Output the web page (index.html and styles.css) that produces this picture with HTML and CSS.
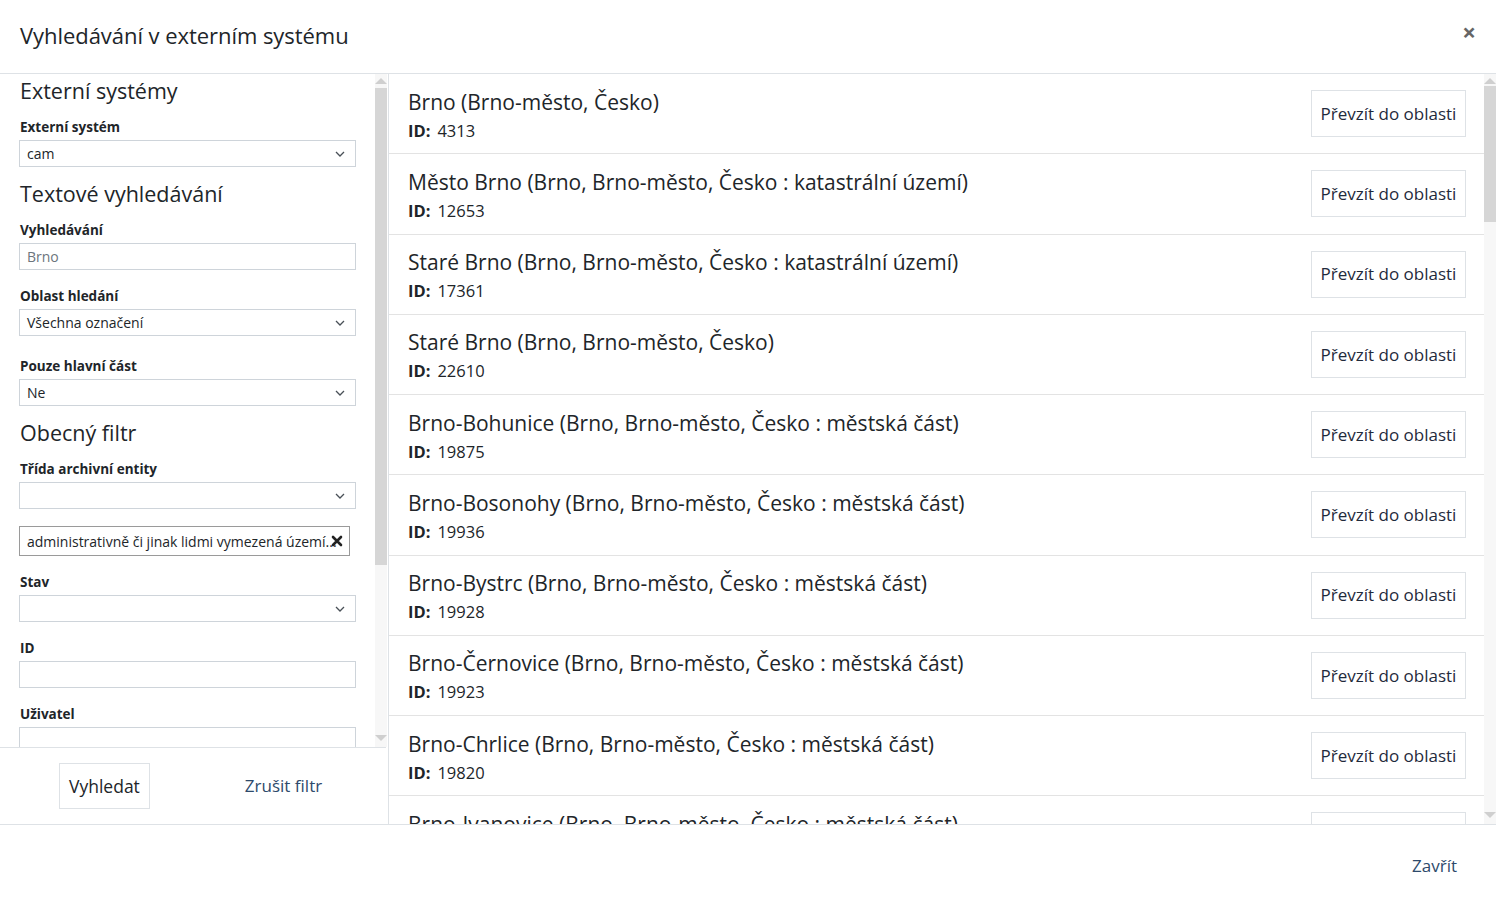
FILE: index.html
```html
<!DOCTYPE html>
<html lang="cs">
<head>
<meta charset="utf-8">
<title>Vyhledávání v externím systému</title>
<link rel="stylesheet" href="styles.css">
</head>
<body>
<div class="modal">
  <header class="modal-header">
    <h1 class="modal-title">Vyhledávání v externím systému</h1>
    <button class="close" type="button" aria-label="Zavřít">×</button>
  </header>
  <div class="modal-body">
    <aside class="filter">
      <div class="filter-scroll">
        <div class="filter-content">
          <h2 class="section-title first">Externí systémy</h2>
          <div class="field">
            <label class="field-label">Externí systém</label>
            <div class="select"><span>cam</span><svg class="chev" width="10" height="6" viewBox="0 0 10 6"><path d="M1 1l4 4 4-4" fill="none" stroke="#495057" stroke-width="1.3"/></svg></div>
          </div>
          <h2 class="section-title">Textové vyhledávání</h2>
          <div class="field">
            <label class="field-label">Vyhledávání</label>
            <div class="input muted">Brno</div>
          </div>
          <div class="field field-wide">
            <label class="field-label">Oblast hledání</label>
            <div class="select"><span>Všechna označení</span><svg class="chev" width="10" height="6" viewBox="0 0 10 6"><path d="M1 1l4 4 4-4" fill="none" stroke="#495057" stroke-width="1.3"/></svg></div>
          </div>
          <div class="field">
            <label class="field-label">Pouze hlavní část</label>
            <div class="select"><span>Ne</span><svg class="chev" width="10" height="6" viewBox="0 0 10 6"><path d="M1 1l4 4 4-4" fill="none" stroke="#495057" stroke-width="1.3"/></svg></div>
          </div>
          <h2 class="section-title">Obecný filtr</h2>
          <div class="field field-tag">
            <label class="field-label">Třída archivní entity</label>
            <div class="select"><span></span><svg class="chev" width="10" height="6" viewBox="0 0 10 6"><path d="M1 1l4 4 4-4" fill="none" stroke="#495057" stroke-width="1.3"/></svg></div>
            <div class="tag-input"><span class="tag-text">administrativně či jinak lidmi vymezená území...</span><svg class="tag-x" width="12" height="12" viewBox="0 0 12 12"><path d="M2 2l8 8M10 2l-8 8" stroke="#222" stroke-width="2.6" stroke-linecap="round"/></svg></div>
          </div>
          <div class="field">
            <label class="field-label">Stav</label>
            <div class="select"><span></span><svg class="chev" width="10" height="6" viewBox="0 0 10 6"><path d="M1 1l4 4 4-4" fill="none" stroke="#495057" stroke-width="1.3"/></svg></div>
          </div>
          <div class="field">
            <label class="field-label">ID</label>
            <div class="input"></div>
          </div>
          <div class="field">
            <label class="field-label">Uživatel</label>
            <div class="input"></div>
          </div>
        </div>
        <div class="scrollbar left-bar">
          <span class="arrow up"></span>
          <div class="track"><div class="thumb"></div></div>
          <span class="arrow down"></span>
        </div>
      </div>
      <div class="filter-footer">
        <button class="btn btn-outline" type="button">Vyhledat</button>
        <button class="btn btn-link" type="button">Zrušit filtr</button>
      </div>
    </aside>
    <section class="results">
      <div class="results-list">
        <div class="row"><div class="row-info"><div class="row-title">Brno (Brno-město, Česko)</div><div class="row-id"><b>ID:</b><span>4313</span></div></div><button class="btn btn-outline take" type="button">Převzít do oblasti</button></div>
        <div class="row"><div class="row-info"><div class="row-title">Město Brno (Brno, Brno-město, Česko : katastrální území)</div><div class="row-id"><b>ID:</b><span>12653</span></div></div><button class="btn btn-outline take" type="button">Převzít do oblasti</button></div>
        <div class="row"><div class="row-info"><div class="row-title">Staré Brno (Brno, Brno-město, Česko : katastrální území)</div><div class="row-id"><b>ID:</b><span>17361</span></div></div><button class="btn btn-outline take" type="button">Převzít do oblasti</button></div>
        <div class="row"><div class="row-info"><div class="row-title">Staré Brno (Brno, Brno-město, Česko)</div><div class="row-id"><b>ID:</b><span>22610</span></div></div><button class="btn btn-outline take" type="button">Převzít do oblasti</button></div>
        <div class="row"><div class="row-info"><div class="row-title">Brno-Bohunice (Brno, Brno-město, Česko : městská část)</div><div class="row-id"><b>ID:</b><span>19875</span></div></div><button class="btn btn-outline take" type="button">Převzít do oblasti</button></div>
        <div class="row"><div class="row-info"><div class="row-title">Brno-Bosonohy (Brno, Brno-město, Česko : městská část)</div><div class="row-id"><b>ID:</b><span>19936</span></div></div><button class="btn btn-outline take" type="button">Převzít do oblasti</button></div>
        <div class="row"><div class="row-info"><div class="row-title">Brno-Bystrc (Brno, Brno-město, Česko : městská část)</div><div class="row-id"><b>ID:</b><span>19928</span></div></div><button class="btn btn-outline take" type="button">Převzít do oblasti</button></div>
        <div class="row"><div class="row-info"><div class="row-title">Brno-Černovice (Brno, Brno-město, Česko : městská část)</div><div class="row-id"><b>ID:</b><span>19923</span></div></div><button class="btn btn-outline take" type="button">Převzít do oblasti</button></div>
        <div class="row"><div class="row-info"><div class="row-title">Brno-Chrlice (Brno, Brno-město, Česko : městská část)</div><div class="row-id"><b>ID:</b><span>19820</span></div></div><button class="btn btn-outline take" type="button">Převzít do oblasti</button></div>
        <div class="row"><div class="row-info"><div class="row-title">Brno-Ivanovice (Brno, Brno-město, Česko : městská část)</div><div class="row-id"><b>ID:</b><span>19842</span></div></div><button class="btn btn-outline take" type="button">Převzít do oblasti</button></div>
      </div>
      <div class="scrollbar right-bar">
        <span class="arrow up"></span>
        <div class="track"><div class="thumb"></div></div>
        <span class="arrow down"></span>
      </div>
    </section>
  </div>
  <footer class="modal-footer">
    <button class="btn btn-link" type="button">Zavřít</button>
  </footer>
</div>
</body>
</html>
```

FILE: styles.css
```css
* { box-sizing: border-box; }
html, body { margin: 0; padding: 0; background: #fff; }
body {
  font-family: "Open Sans", "Noto Sans", "DejaVu Sans", sans-serif;
  color: #212529;
  width: 1496px;
  height: 907px;
  overflow: hidden;
}
button { font-family: inherit; cursor: pointer; }

.modal { display: flex; flex-direction: column; height: 907px; }

.modal-header {
  height: 74px;
  flex: none;
  display: flex;
  align-items: center;
  justify-content: space-between;
  padding: 0 20px 0 20px;
  border-bottom: 1px solid #dee2e6;
}
.modal-title { margin: 0 0 4px 0; font-size: 22px; font-weight: 400; letter-spacing: -0.05px; }
.close {
  border: 0; background: none; padding: 0;
  font-size: 24px; line-height: 1; color: #666; font-weight: 700;
  margin-bottom: 10px;
}

.modal-body { display: flex; height: 750px; flex: none; }

.filter {
  width: 389px; flex: none;
  border-right: 1px solid #dee2e6;
  display: flex; flex-direction: column;
}
.filter-scroll { display: flex; height: 673px; flex: none; overflow: hidden; }
.filter-content { width: 375px; flex: none; padding: 2px 19px 0 19px; overflow: hidden; }

.section-title { margin: -4px 0 11px 1px; font-size: 21.5px; font-weight: 400; line-height: 30px; }
.section-title.first { margin-top: 0; }
.field { margin-bottom: 16px; }
.field-wide { margin-bottom: 20px; }
.field-tag { margin-bottom: 16px; }
.field-label { display: block; font-size: 13.5px; font-weight: 700; line-height: 20px; margin: 0 0 3px 1px; }
.select, .input {
  height: 27px;
  border: 1px solid #ced4da;
  display: flex; align-items: center; justify-content: space-between;
  padding: 0 10px 0 7px;
  font-size: 14px;
}
.muted { color: #6c757d; }
.chev { flex: none; margin-top: 1px; }
.tag-input {
  margin-top: 17px;
  width: 331px; height: 30px;
  border: 1px solid #9a9a9a;
  display: flex; align-items: center; justify-content: space-between;
  padding: 0 6px 0 7px;
  font-size: 14px;
  white-space: nowrap; overflow: hidden;
}
.tag-text { overflow: hidden; }
.tag-x { flex: none; margin-left: -8px; }

.scrollbar {
  width: 12px; flex: none;
  background: #f7f7f7;
  display: flex; flex-direction: column; align-items: center;
}
.scrollbar .track { flex: 1; width: 100%; padding: 0; }
.scrollbar .thumb { width: 100%; background: #d6d6d6; }
.arrow { width: 0; height: 0; border-left: 6px solid transparent; border-right: 6px solid transparent; flex: none; }
.arrow.up { border-bottom: 6px solid #cfcfcf; margin: 4px 0 2px; }
.arrow.down { border-top: 6px solid #cfcfcf; margin: 2px 0 6px; }
.left-bar .track { padding-top: 2px; }
.left-bar .thumb { height: 477px; }
.right-bar .thumb { height: 136px; }

.filter-footer {
  flex: 1;
  border-top: 1px solid #dee2e6;
  display: flex; align-items: center;
  padding: 0 0 0 59px;
  gap: 84px;
  margin-right: 2px;
}
.btn {
  font-size: 17.5px; line-height: 1.5;
  background: #fff; color: #212529;
  border: 1px solid #dee2e6;
  padding: 0 10px;
  height: 46px;
}
.btn-link { border-color: transparent; color: #2e4a6b; }
.filter-footer .btn-outline { color: #212529; padding: 0 9px; }
.filter-footer .btn-link { font-size: 17px; }

.results { flex: 1; display: flex; min-width: 0; }
.results-list { flex: 1; overflow: hidden; }
.row {
  height: 80.25px;
  border-bottom: 1px solid #e3e3e3;
  display: flex; align-items: center; justify-content: space-between;
  padding: 0 18px 0 19px;
}
.row-info { display: flex; flex-direction: column; margin-top: 4px; }
.row-title { font-size: 21px; line-height: 30px; white-space: nowrap; }
.row-id { font-size: 16.5px; line-height: 28px; }
.row-id b { font-weight: 700; margin-right: 7px; }
.take { width: 155px; height: 47px; padding: 0; color: #1f2a3c; font-size: 17px; }

.modal-footer {
  flex: 1;
  border-top: 1px solid #dee2e6;
  display: flex; align-items: center; justify-content: flex-end;
  padding: 0 28px 0 0;
}
.modal-footer .btn { padding: 0 10px; font-size: 17px; }
```
